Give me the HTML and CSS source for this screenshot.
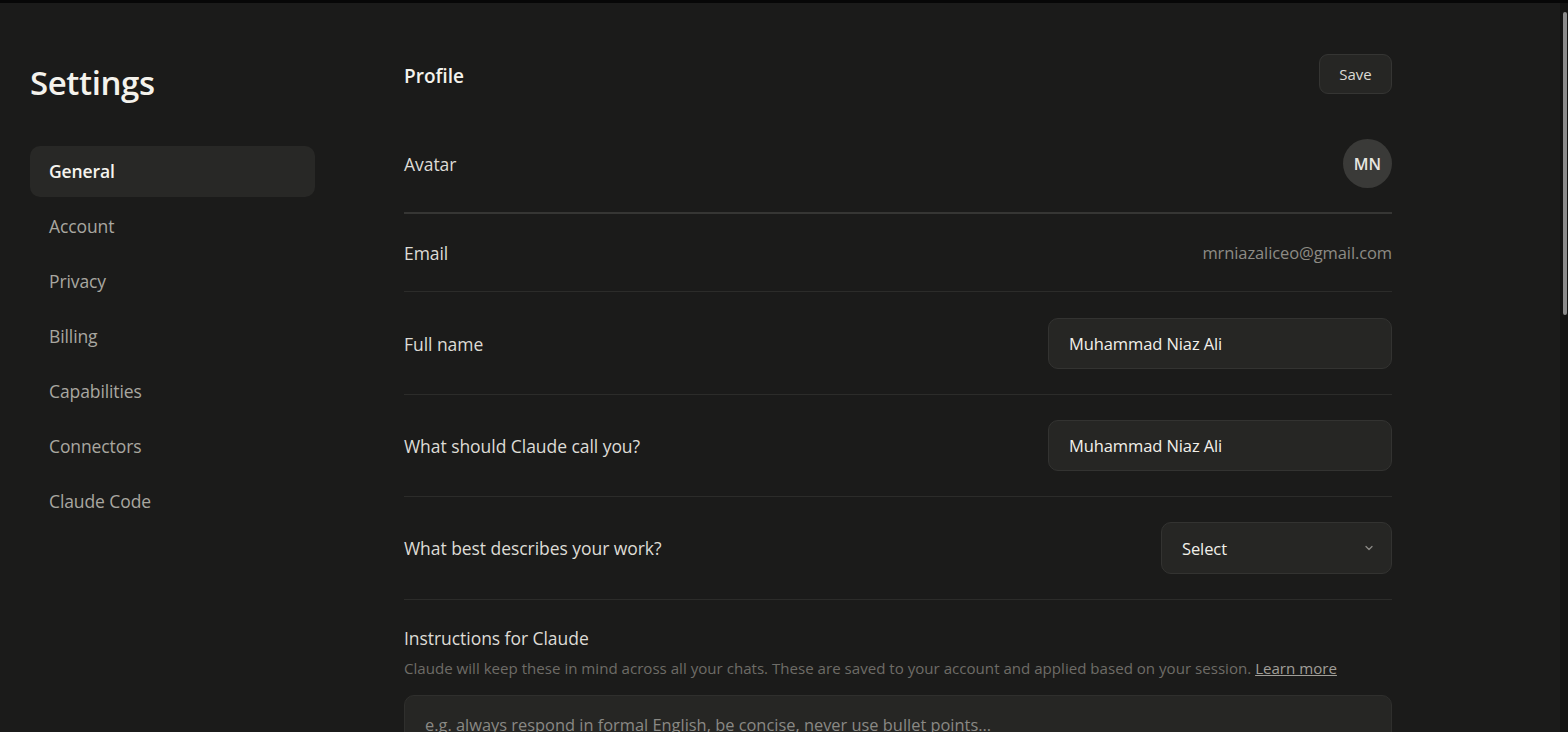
FILE: index.html
```
<!DOCTYPE html>
<html lang="en">
<head>
<meta charset="utf-8">
<title>Settings</title>
<link rel="stylesheet" href="styles.css">
</head>
<body>
<div class="topbar"></div>
<div class="layout">
  <aside class="sidebar">
    <h1 class="title">Settings</h1>
    <nav class="nav">
      <a class="nav-item active">General</a>
      <a class="nav-item">Account</a>
      <a class="nav-item">Privacy</a>
      <a class="nav-item">Billing</a>
      <a class="nav-item">Capabilities</a>
      <a class="nav-item">Connectors</a>
      <a class="nav-item">Claude Code</a>
    </nav>
  </aside>
  <main class="main">
    <div class="header">
      <h2 class="section-title">Profile</h2>
      <button class="btn">Save</button>
    </div>
    <div class="row row-strong">
      <span class="label">Avatar</span>
      <div class="avatar">MN</div>
    </div>
    <div class="row">
      <span class="label">Email</span>
      <span class="value">mrniazaliceo@gmail.com</span>
    </div>
    <div class="row row-first-input">
      <span class="label">Full name</span>
      <div class="input">Muhammad Niaz Ali</div>
    </div>
    <div class="row">
      <span class="label">What should Claude call you?</span>
      <div class="input">Muhammad Niaz Ali</div>
    </div>
    <div class="row">
      <span class="label">What best describes your work?</span>
      <div class="select">
        <span>Select</span>
        <svg class="chev" width="12" height="12" viewBox="0 0 12 12"><path d="M3 4.5 L6 7.5 L9 4.5" fill="none" stroke="#8a8985" stroke-width="1.3" stroke-linecap="round" stroke-linejoin="round"/></svg>
      </div>
    </div>
    <div class="instructions">
      <div class="label">Instructions for Claude</div>
      <p class="desc">Claude will keep these in mind across all your chats. These are saved to your account and applied based on your session. <a class="link">Learn more</a></p>
      <div class="textarea">e.g. always respond in formal English, be concise, never use bullet points...</div>
    </div>
  </main>
</div>
<div class="scrollbar"><div class="thumb"></div></div>
</body>
</html>
```
FILE: styles.css
```
html, body {
  margin: 0;
  padding: 0;
  background: #1b1b1a;
  color: #e6e4de;
  font-family: "Open Sans", "Noto Sans", sans-serif;
}

.topbar {
  height: 3px;
  background: #070707;
}
.scrollbar {
  position: fixed;
  top: 3px;
  right: 0;
  bottom: 0;
  width: 8px;
  background: #141413;
}
.thumb {
  margin: 9px 0 0 3px;
  width: 4px;
  height: 303px;
  background: #8b8b8b;
  border-radius: 2px;
}
.layout {
  display: flex;
  padding-left: 30px;
}
.sidebar {
  width: 285px;
  margin-right: 89px;
  flex-shrink: 0;
}
.title {
  margin: 57px 0 0;
  font-size: 33px;
  font-weight: 600;
  line-height: 46px;
  color: #f4f2ec;
  letter-spacing: -0.4px;
}
.nav {
  margin-top: 40px;
  display: flex;
  flex-direction: column;
  gap: 4px;
}
.nav-item {
  display: block;
  height: 51px;
  line-height: 51px;
  padding-left: 19px;
  border-radius: 10px;
  font-size: 17.5px;
  color: #a9a7a0;
  letter-spacing: -0.1px;
}
.nav-item.active {
  background: #282826;
  color: #f6f4ee;
  font-weight: 600;
}
.main {
  width: 988px;
  flex-shrink: 0;
}
.header {
  display: flex;
  justify-content: space-between;
  align-items: center;
  margin-top: 51px;
  height: 40px;
  margin-bottom: 20px;
}
.section-title {
  margin: 0;
  padding-top: 4px;
  font-size: 19px;
  font-weight: 600;
  color: #f4f2ec;
}
.btn {
  width: 73px;
  height: 40px;
  background: #262624;
  border: 1px solid #353533;
  border-radius: 9px;
  color: #dcdad4;
  font-family: inherit;
  font-size: 15px;
  padding-top: 1px;
}
.row {
  display: flex;
  justify-content: space-between;
  align-items: center;
  padding: 25px 0;
  border-bottom: 1px solid #2c2c2a;
  min-height: 27px;
}
.row-strong {
  border-bottom: 2px solid #363634;
  padding-bottom: 24px;
}
.row-first-input {
  padding-top: 26px;
}
.label {
  font-size: 17.5px;
  color: #dedcd6;
  letter-spacing: -0.05px;
}
.value {
  font-size: 16.5px;
  color: #8d8b85;
  letter-spacing: -0.1px;
}
.avatar {
  width: 49px;
  height: 49px;
  border-radius: 50%;
  background: #3a3a38;
  display: flex;
  align-items: center;
  justify-content: center;
  font-size: 16px;
  font-weight: 600;
  color: #e8e6e0;
}
.input, .select {
  box-sizing: border-box;
  height: 51px;
  background: #262624;
  border: 1px solid #333331;
  border-radius: 10px;
  padding: 0 20px;
  display: flex;
  align-items: center;
  font-size: 16.5px;
  color: #f2f0ea;
  letter-spacing: -0.1px;
}
.input { width: 344px; }
.select {
  width: 231px;
  height: 52px;
  justify-content: space-between;
  padding-right: 16px;
}
.instructions {
  padding-top: 26px;
}
.desc {
  margin: 8px 0 17px;
  font-size: 15.1px;
  color: #6e6c67;
  letter-spacing: 0;
}
.link {
  color: #a09e98;
  text-decoration: underline;
}
.textarea {
  box-sizing: border-box;
  height: 140px;
  background: #262624;
  border: 1px solid #2f2f2d;
  border-radius: 10px;
  padding: 17px 20px;
  font-size: 16.4px;
  color: #8a8984;
  letter-spacing: 0;
}
```
